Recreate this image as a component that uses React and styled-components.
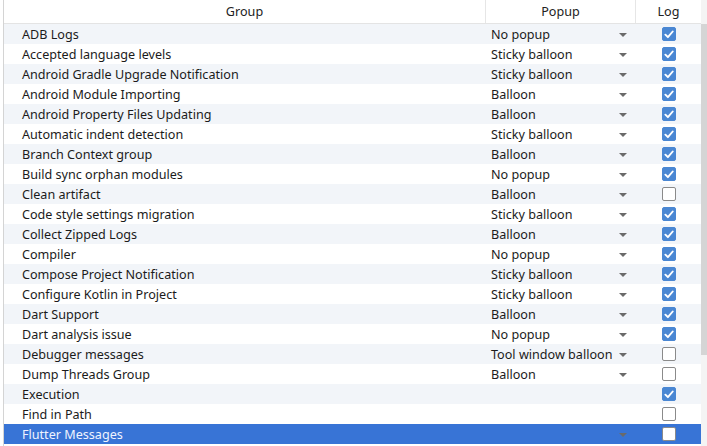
import React from 'react'
import styled, { createGlobalStyle } from 'styled-components'

const GlobalStyle = createGlobalStyle`
  html, body {
    margin: 0;
    padding: 0;
    background: #ffffff;
  }
  body {
    font-family: "Noto Sans", "Liberation Sans", sans-serif;
    font-size: 12.6px;
    color: #1b1b1b;
  }
`

const rows = [
  ['ADB Logs', 'No popup', true],
  ['Accepted language levels', 'Sticky balloon', true],
  ['Android Gradle Upgrade Notification', 'Sticky balloon', true],
  ['Android Module Importing', 'Balloon', true],
  ['Android Property Files Updating', 'Balloon', true],
  ['Automatic indent detection', 'Sticky balloon', true],
  ['Branch Context group', 'Balloon', true],
  ['Build sync orphan modules', 'No popup', true],
  ['Clean artifact', 'Balloon', false],
  ['Code style settings migration', 'Sticky balloon', true],
  ['Collect Zipped Logs', 'Balloon', true],
  ['Compiler', 'No popup', true],
  ['Compose Project Notification', 'Sticky balloon', true],
  ['Configure Kotlin in Project', 'Sticky balloon', true],
  ['Dart Support', 'Balloon', true],
  ['Dart analysis issue', 'No popup', true],
  ['Debugger messages', 'Tool window balloon', false],
  ['Dump Threads Group', 'Balloon', false],
  ['Execution', null, true],
  ['Find in Path', null, false],
  ['Flutter Messages', '', false],
]

const Frame = styled.div`
  display: flex;
  width: 707px;
  height: 446px;
  overflow: hidden;
`

const Table = styled.div`
  flex: 1;
  display: flex;
  flex-direction: column;
  margin-left: 3px;
  border-left: 1px solid #d4d4d4;
`

const columns = '482px 150px 65px'

const Header = styled.div`
  display: grid;
  grid-template-columns: ${columns};
  height: 23px;
  border-bottom: 1px solid #e4e4e4;
  background: #ffffff;
`

const HeadCell = styled.div`
  display: flex;
  align-items: center;
  justify-content: center;
  border-right: ${p => (p.$last ? 'none' : '1px solid #e6e6e6')};
  color: #222;
`

const Row = styled.div`
  display: grid;
  grid-template-columns: ${columns};
  height: 20px;
  background: ${p => (p.$selected ? '#3874d6' : p.$odd ? '#f2f5f9' : '#ffffff')};
  color: ${p => (p.$selected ? '#eef3ff' : '#1b1b1b')};
`

const GroupCell = styled.div`
  display: flex;
  align-items: center;
  padding-left: 18px;
  white-space: nowrap;
`

const PopupCell = styled.div`
  display: flex;
  align-items: center;
  padding-left: 5px;
  padding-right: 9px;
  white-space: nowrap;
`

const PopupText = styled.span`
  flex: 1;
`

const Arrow = styled.span`
  width: 0;
  height: 0;
  border-left: 4px solid transparent;
  border-right: 4px solid transparent;
  border-top: 4px solid #6a6a6a;
  margin-top: 1px;
`

const LogCell = styled.div`
  display: flex;
  align-items: center;
  padding-left: 26px;
`

const Box = styled.span`
  box-sizing: border-box;
  width: 14px;
  height: 14px;
  border-radius: 2px;
  display: flex;
  align-items: center;
  justify-content: center;
  background: ${p => (p.$checked ? '#4a87d3' : '#ffffff')};
  border: 1px solid ${p => (p.$checked ? '#4a87d3' : '#8a8a8a')};
`

const Scrollbar = styled.div`
  width: 6px;
  display: flex;
  flex-direction: column;
  background: #f4f4f4;
`

const Thumb = styled.div`
  margin-top: 24px;
  height: 331px;
  background: #d5d5d5;
`

const Check = () => (
  <svg width="10" height="9" viewBox="0 0 10 9">
    <path d="M1.4 4.7 L3.9 7.2 L8.7 1.5" fill="none" stroke="#fff" strokeWidth="1.9" strokeLinecap="round" strokeLinejoin="round" />
  </svg>
)

const App = () => (
  <Frame>
    <GlobalStyle />
    <Table>
      <Header>
        <HeadCell>Group</HeadCell>
        <HeadCell>Popup</HeadCell>
        <HeadCell $last>Log</HeadCell>
      </Header>
      {rows.map(([group, popup, log], i) => (
        <Row key={group} $odd={i % 2 === 0} $selected={i === rows.length - 1}>
          <GroupCell>{group}</GroupCell>
          <PopupCell>
            <PopupText>{popup}</PopupText>
            {popup !== null && <Arrow />}
          </PopupCell>
          <LogCell>
            <Box $checked={log}>{log && <Check />}</Box>
          </LogCell>
        </Row>
      ))}
    </Table>
    <Scrollbar>
      <Thumb />
    </Scrollbar>
  </Frame>
)

export default App
